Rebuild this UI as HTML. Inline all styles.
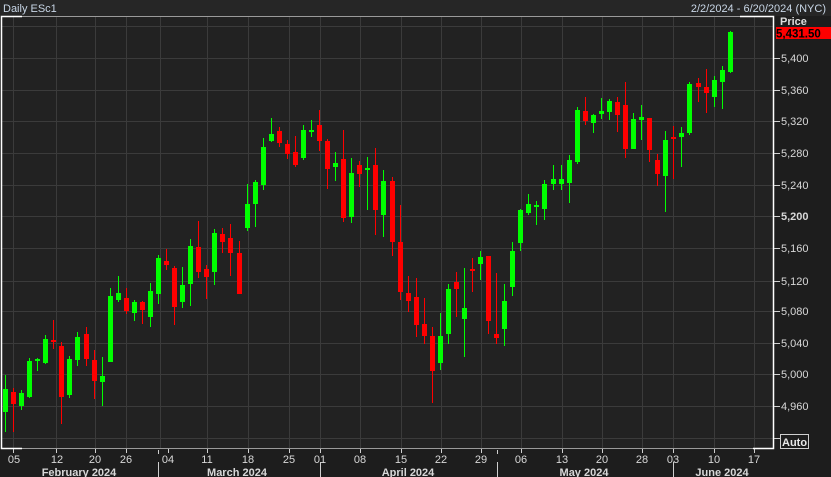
<!DOCTYPE html>
<html><head><meta charset="utf-8"><style>
html,body{margin:0;padding:0;background:#1d1d1d;width:831px;height:477px;overflow:hidden}
svg{display:block}
text{font-family:"Liberation Sans",sans-serif;font-size:11px;fill:#d8d8d8}
</style></head><body>
<svg width="831" height="477" viewBox="0 0 831 477" xmlns="http://www.w3.org/2000/svg">
<rect x="0" y="0" width="831" height="477" fill="#1d1d1d"/>
<rect x="0" y="0" width="831" height="16" fill="#262626"/>
<rect x="1" y="16" width="772" height="433" fill="#222222"/>
<g stroke="#3b3b3b" stroke-width="1">
<path d="M1 26.5H773M1 58.5H773M1 90.5H773M1 121.5H773M1 153.5H773M1 185.5H773M1 216.5H773M1 248.5H773M1 281.5H773M1 311.5H773M1 343.5H773M1 374.5H773M1 406.5H773M1 438.5H773"/>
<path d="M13.5 16V449M56.5 16V449M95.5 16V449M126.5 16V449M160.5 16V449M207.5 16V449M248.5 16V449M289.5 16V449M320.5 16V449M360.5 16V449M401.5 16V449M441.5 16V449M481.5 16V449M521.5 16V449M562.5 16V449M602.5 16V449M642.5 16V449M673.5 16V449M714.5 16V449M754.5 16V449"/>
</g>
<g stroke="#9a9a9a" fill="none">
<path d="M1 16.5H773.5V448.5H1"/>
</g>
<g stroke="#ffffff" fill="none" stroke-width="1.5">
<path d="M22 16.5H1.5V448.5H22"/><path d="M740 16.5H773.5V448.5H753"/>
</g>
<g stroke="#00ff00" fill="none">
<path d="M5.5 375V432M21.5 390V410M29.5 358V398M37.5 358V371M45.5 335V364M69.5 356V398M77.5 332V366M102.5 357V406M110.5 288V362M118.5 276V302M134.5 300V321M150.5 283V327M158.5 255V304M182.5 267V308M190.5 239V306M214.5 229V285M247.5 184V231M255.5 180V227M263.5 138V190M271.5 118V142M303.5 125V160M311.5 120V137M335.5 152V181M351.5 158V223M367.5 157V210M383.5 170V237M440.5 313V370M448.5 284V344M464.5 268V357M480.5 251V280M504.5 284V346M512.5 242V296M520.5 209V251M528.5 194V215M536.5 201V225M544.5 180V220M553.5 165V190M561.5 165V190M569.5 155V203M577.5 107V164M593.5 114V133M601.5 98V119M609.5 99V120M633.5 113V149M641.5 105V140M665.5 131V212M681.5 127V167M689.5 82V135M714.5 76V107M722.5 66V109M730.5 31V73"/>
</g>
<g fill="#00ff00">
<path d="M3 389h5v23h-5zM19 393h5v13h-5zM27 361h5v36h-5zM35 359h5v2h-5zM43 339h5v24h-5zM67 359h5v36h-5zM75 337h5v23h-5zM100 376h5v6h-5zM108 296h5v66h-5zM116 293h5v7h-5zM132 302h5v11h-5zM148 291h5v26h-5zM156 258h5v36h-5zM180 285h5v17h-5zM188 246h5v38h-5zM212 233h5v39h-5zM245 204h5v24h-5zM253 182h5v22h-5zM261 147h5v38h-5zM269 134h5v7h-5zM301 130h5v28h-5zM309 130h5v2h-5zM333 163h5v4h-5zM349 173h5v44h-5zM365 168h5v2h-5zM381 181h5v34h-5zM438 336h5v27h-5zM446 289h5v45h-5zM462 308h5v11h-5zM478 257h5v7h-5zM502 301h5v28h-5zM510 251h5v36h-5zM518 210h5v33h-5zM526 204h5v9h-5zM534 205h5v2h-5zM542 184h5v25h-5zM551 179h5v5h-5zM559 179h5v5h-5zM567 160h5v23h-5zM575 110h5v52h-5zM591 115h5v8h-5zM599 111h5v3h-5zM607 101h5v11h-5zM631 119h5v30h-5zM639 117h5v3h-5zM663 140h5v36h-5zM679 133h5v4h-5zM687 84h5v49h-5zM712 80h5v17h-5zM720 70h5v12h-5zM728 32h5v40h-5z"/>
</g>
<g stroke="#ff0000" fill="none">
<path d="M13.5 388V432M53.5 320V349M61.5 342V424M86.5 327V366M94.5 350V399M126.5 288V314M142.5 301V324M166.5 249V270M174.5 266V325M198.5 221V278M206.5 265V299M222.5 228V253M230.5 224V276M239.5 241V294M279.5 127V147M287.5 140V159M295.5 136V167M319.5 110V151M327.5 139V189M343.5 130V222M359.5 161V187M375.5 148V235M392.5 177V256M400.5 205V300M408.5 276V312M416.5 278V337M424.5 298V344M432.5 327V403M456.5 272V317M472.5 258V292M488.5 256V334M496.5 273V344M585.5 97V125M617.5 97V132M625.5 82V158M649.5 118V162M657.5 154V186M673.5 126V179M698.5 78V102M706.5 69V113"/>
</g>
<g fill="#ff0000">
<path d="M11 392h5v12h-5zM51 340h5v2h-5zM59 346h5v51h-5zM84 334h5v25h-5zM92 360h5v21h-5zM124 298h5v13h-5zM140 302h5v8h-5zM164 261h5v4h-5zM172 268h5v39h-5zM196 247h5v25h-5zM204 269h5v8h-5zM220 234h5v8h-5zM228 238h5v15h-5zM237 253h5v41h-5zM277 131h5v12h-5zM285 144h5v10h-5zM293 152h5v13h-5zM317 125h5v16h-5zM325 141h5v28h-5zM341 159h5v59h-5zM357 165h5v9h-5zM373 165h5v45h-5zM390 181h5v61h-5zM398 242h5v50h-5zM406 293h5v8h-5zM414 297h5v28h-5zM422 324h5v12h-5zM430 336h5v35h-5zM454 282h5v7h-5zM470 269h5v2h-5zM486 256h5v65h-5zM494 334h5v4h-5zM583 111h5v10h-5zM615 102h5v13h-5zM623 105h5v44h-5zM647 118h5v32h-5zM655 160h5v14h-5zM671 137h5v2h-5zM696 83h5v4h-5zM704 87h5v6h-5z"/>
</g>
<!-- price axis -->
<g stroke="#cfcfcf"><path d="M774 58.5h6M774 90.5h6M774 121.5h6M774 153.5h6M774 185.5h6M774 216.5h6M774 248.5h6M774 281.5h6M774 311.5h6M774 343.5h6M774 374.5h6M774 406.5h6M774 438.5h6"/></g>
<text x="780" y="25" style="font-weight:bold;fill:#dddddd">Price</text>
<rect x="776" y="27" width="55" height="12" fill="#ff0000"/>
<text x="776" y="37.5" style="font-weight:bold;fill:#000;font-size:11.5px">5,431.50</text>
<g>
<text x="781" y="62">5,400</text><text x="781" y="94">5,360</text><text x="781" y="125">5,320</text><text x="781" y="157">5,280</text><text x="781" y="189">5,240</text><text x="781" y="220" style="font-weight:bold">5,200</text><text x="781" y="252">5,160</text><text x="781" y="285">5,120</text><text x="781" y="315">5,080</text><text x="781" y="347">5,040</text><text x="781" y="378">5,000</text><text x="781" y="410">4,960</text>
</g>
<rect x="780.5" y="434.5" width="28" height="14" fill="none" stroke="#cfcfcf"/>
<text x="782" y="446" style="font-weight:bold;fill:#e8e8e8">Auto</text>
<!-- date axis -->
<g stroke="#cfcfcf"><path d="M13.5 449v4M56.5 449v4M95.5 449v4M126.5 449v4M168.5 449v4M207.5 449v4M248.5 449v4M289.5 449v4M320.5 449v4M360.5 449v4M401.5 449v4M441.5 449v4M481.5 449v4M521.5 449v4M562.5 449v4M602.5 449v4M642.5 449v4M673.5 449v4M714.5 449v4M754.5 449v4"/>
<path d="M158.5 450v4M158.5 462v15M320.5 462v15M497.5 450v4M497.5 462v15M673.5 462v15"/></g>
<g text-anchor="middle">
<text x="14" y="463">05</text><text x="57" y="463">12</text><text x="95" y="463">20</text><text x="126" y="463">26</text><text x="168" y="463">04</text><text x="207" y="463">11</text><text x="248" y="463">18</text><text x="289" y="463">25</text><text x="320" y="463">01</text><text x="360" y="463">08</text><text x="401" y="463">15</text><text x="441" y="463">22</text><text x="481" y="463">29</text><text x="521" y="463">06</text><text x="562" y="463">13</text><text x="602" y="463">20</text><text x="642" y="463">28</text><text x="673" y="463">03</text><text x="714" y="463">10</text><text x="754" y="463">17</text>
<text x="79" y="476" style="font-weight:bold">February 2024</text><text x="237" y="476" style="font-weight:bold">March 2024</text><text x="408" y="476" style="font-weight:bold">April 2024</text><text x="584" y="476" style="font-weight:bold">May 2024</text><text x="722" y="476" style="font-weight:bold">June 2024</text>
</g>
<text x="3" y="12" style="fill:#c8d6e6">Daily ESc1</text>
<text x="826" y="12" text-anchor="end" style="fill:#c8d6e6">2/2/2024 - 6/20/2024 (NYC)</text>
</svg>
</body></html>
